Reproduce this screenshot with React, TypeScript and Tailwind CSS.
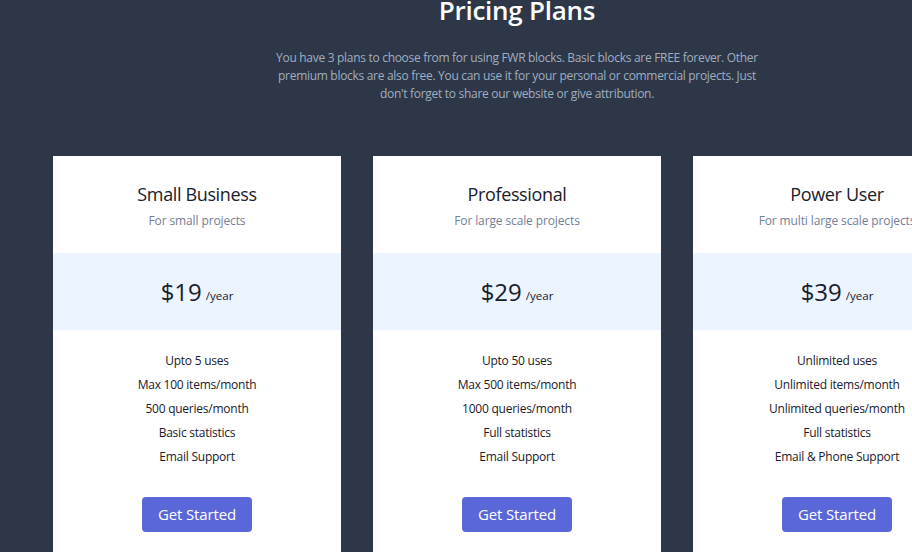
const plans = [
  {
    name: 'Small Business',
    desc: 'For small projects',
    price: '$19',
    features: ['Upto 5 uses', 'Max 100 items/month', '500 queries/month', 'Basic statistics', 'Email Support'],
  },
  {
    name: 'Professional',
    desc: 'For large scale projects',
    price: '$29',
    features: ['Upto 50 uses', 'Max 500 items/month', '1000 queries/month', 'Full statistics', 'Email Support'],
  },
  {
    name: 'Power User',
    desc: 'For multi large scale projects',
    price: '$39',
    features: ['Unlimited uses', 'Unlimited items/month', 'Unlimited queries/month', 'Full statistics', 'Email & Phone Support'],
  },
]

export default function App() {
  return (
    <div
      className="w-full h-[552px] overflow-hidden bg-[#2d3748]"
      style={{ fontFamily: '"Open Sans", "Noto Sans", sans-serif' }}
    >
      <div className="w-[1034px] flex flex-col items-center">
        {/* Header */}
        <h1 className="text-[26px] leading-[36px] -mt-[8px] font-semibold tracking-[-0.01em] text-white">
          Pricing Plans
        </h1>
        <p className="mt-[21px] text-center text-[12px] leading-[18px] tracking-[-0.025em] text-[#a0aec0]">
          You have 3 plans to choose from for using FWR blocks. Basic blocks are FREE forever. Other
          <br />
          premium blocks are also free. You can use it for your personal or commercial projects. Just
          <br />
          don't forget to share our website or give attribution.
        </p>

        {/* Plans */}
        <div className="mt-[53px] flex gap-8">
          {plans.map((plan) => (
            <div key={plan.name} className="w-72 h-[420px] bg-white text-center">
              <div className="pt-[26px] pb-[23px]">
                <h2 className="text-lg leading-6 font-medium tracking-[-0.02em] text-[#1a202c]">{plan.name}</h2>
                <p className="mt-[6px] text-[12px] leading-[18px] tracking-[-0.01em] text-[#718096]">{plan.desc}</p>
              </div>
              <div className="h-[77px] bg-[#ebf4ff] flex items-center justify-center">
                <span className="text-2xl leading-none text-[#1a202c]">{plan.price}</span>
                <span className="ml-1 mt-[8px] text-[11.5px] text-[#1a202c]">/year</span>
              </div>
              <ul className="pt-[19px] text-[12px] leading-6 tracking-[-0.02em] text-[#1a202c]">
                {plan.features.map((f) => (
                  <li key={f}>{f}</li>
                ))}
              </ul>
              <button className="mt-[28px] h-[35px] px-4 rounded bg-[#5a67d8] text-white text-[15px] tracking-[-0.01em]">
                Get Started
              </button>
            </div>
          ))}
        </div>
      </div>
    </div>
  )
}
